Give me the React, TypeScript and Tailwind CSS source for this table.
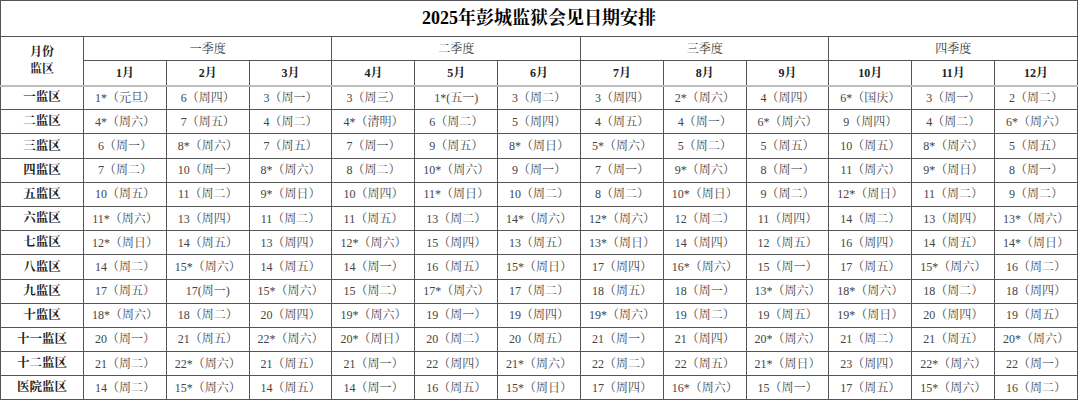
import React from "react";

type Row = {
  name: string;
  days: string[];
};

const quarters = ["一季度", "二季度", "三季度", "四季度"];
const months = ["1月", "2月", "3月", "4月", "5月", "6月", "7月", "8月", "9月", "10月", "11月", "12月"];

const rows: Row[] = [
  { name: "一监区", days: ["1*（元旦）", "6（周四）", "3（周一）", "3（周三）", "1*(五一)", "3（周二）", "3（周四）", "2*（周六）", "4（周四）", "6*（国庆）", "3（周一）", "2（周二）"] },
  { name: "二监区", days: ["4*（周六）", "7（周五）", "4（周二）", "4*（清明）", "6（周二）", "5（周四）", "4（周五）", "4（周一）", "6*（周六）", "9（周四）", "4（周二）", "6*（周六）"] },
  { name: "三监区", days: ["6（周一）", "8*（周六）", "7（周五）", "7（周一）", "9（周五）", "8*（周日）", "5*（周六）", "5（周二）", "5（周五）", "10（周五）", "8*（周六）", "5（周五）"] },
  { name: "四监区", days: ["7（周二）", "10（周一）", "8*（周六）", "8（周二）", "10*（周六）", "9（周一）", "7（周一）", "9*（周六）", "8（周一）", "11（周六）", "9*（周日）", "8（周一）"] },
  { name: "五监区", days: ["10（周五）", "11（周二）", "9*（周日）", "10（周四）", "11*（周日）", "10（周二）", "8（周二）", "10*（周日）", "9（周二）", "12*（周日）", "11（周二）", "9（周二）"] },
  { name: "六监区", days: ["11*（周六）", "13（周四）", "11（周二）", "11（周五）", "13（周二）", "14*（周六）", "12*（周六）", "12（周二）", "11（周四）", "14（周二）", "13（周四）", "13*（周六）"] },
  { name: "七监区", days: ["12*（周日）", "14（周五）", "13（周四）", "12*（周六）", "15（周四）", "13（周五）", "13*（周日）", "14（周四）", "12（周五）", "16（周四）", "14（周五）", "14*（周日）"] },
  { name: "八监区", days: ["14（周二）", "15*（周六）", "14（周五）", "14（周一）", "16（周五）", "15*（周日）", "17（周四）", "16*（周六）", "15（周一）", "17（周五）", "15*（周六）", "16（周二）"] },
  { name: "九监区", days: ["17（周五）", "17(周一)", "15*（周六）", "15（周二）", "17*（周六）", "17（周二）", "18（周五）", "18（周一）", "13*（周六）", "18*（周六）", "18（周二）", "18（周四）"] },
  { name: "十监区", days: ["18*（周六）", "18（周二）", "20（周四）", "19*（周六）", "19（周一）", "19（周四）", "19*（周六）", "19（周二）", "19（周五）", "19*（周日）", "20（周四）", "19（周五）"] },
  { name: "十一监区", days: ["20（周一）", "21（周五）", "22*（周六）", "20*（周日）", "20（周二）", "20（周五）", "21（周一）", "21（周四）", "20*（周六）", "21（周二）", "21（周五）", "20*（周六）"] },
  { name: "十二监区", days: ["21（周二）", "22*（周六）", "21（周五）", "21（周一）", "22（周四）", "21*（周六）", "22（周二）", "22（周五）", "21*（周日）", "23（周四）", "22*（周六）", "22（周一）"] },
  { name: "医院监区", days: ["14（周二）", "15*（周六）", "14（周五）", "14（周一）", "16（周五）", "15*（周日）", "17（周四）", "16*（周六）", "15（周一）", "17（周五）", "15*（周六）", "16（周二）"] }
];

const font = "font-['Liberation_Serif','Noto_Serif_CJK_SC','Noto_Sans_CJK_SC',serif]";
const cell = "border border-[#555] p-0 text-center align-middle";

export default function App() {
  return (
    <div className={`w-[1080px] h-[400px] overflow-hidden bg-white ${font}`}>
      <table className="w-[1078px] table-fixed border-collapse">
        <colgroup>
          <col className="w-[83px]" />
          {months.map((m) => (
            <col key={m} />
          ))}
        </colgroup>
        <thead>
          <tr className="h-[36px]">
            <th colSpan={13} className={`${cell} text-[18px] font-bold text-black`}>
              2025年彭城监狱会见日期安排
            </th>
          </tr>
          <tr className="h-[24px]">
            <th rowSpan={2} className={`${cell} border-b-2 border-b-[#bdbdbd] text-[12px] font-bold leading-[17px] text-[#222]`}>
              月份
              <br />
              监区
            </th>
            {quarters.map((q) => (
              <th key={q} colSpan={3} className={`${cell} text-[12px] font-normal text-[#333]`}>
                {q}
              </th>
            ))}
          </tr>
          <tr className="h-[25px]">
            {months.map((m) => (
              <th key={m} className={`${cell} border-b-2 border-b-[#bdbdbd] text-[12px] font-bold text-[#222]`}>
                {m}
              </th>
            ))}
          </tr>
        </thead>
        <tbody>
          {rows.map((row) => (
            <tr key={row.name} className="h-[24.2px]">
              <td className={`${cell} text-[12.5px] font-bold text-[#222]`}>{row.name}</td>
              {row.days.map((d, i) => (
                <td key={i} className={`${cell} whitespace-nowrap text-[12px] text-[#444]`}>
                  {d}
                </td>
              ))}
            </tr>
          ))}
        </tbody>
      </table>
    </div>
  );
}
